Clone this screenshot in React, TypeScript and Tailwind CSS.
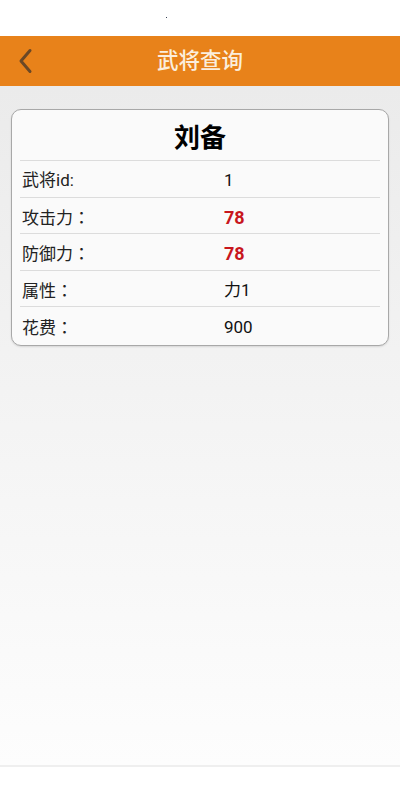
import React from 'react';

interface Row {
  label: string;
  colon: string;
  value: string;
  highlight?: boolean;
}

const rows: Row[] = [
  { label: '武将id', colon: ':', value: '1' },
  { label: '攻击力', colon: '：', value: '78', highlight: true },
  { label: '防御力', colon: '：', value: '78', highlight: true },
  { label: '属性', colon: '：', value: '力1' },
  { label: '花费', colon: '：', value: '900' },
];

const font = { fontFamily: 'Roboto, "Noto Sans CJK SC", sans-serif' };
const colonFont = { fontFamily: '"Noto Sans CJK TC", sans-serif' };

export default function App() {
  return (
    <div className="flex h-[800px] w-[400px] flex-col bg-white" style={font}>
      {/* Status bar */}
      <div className="relative h-[36px] shrink-0 bg-white">
        <span className="absolute left-[166px] top-[17px] h-[1px] w-[1px] bg-gray-700" />
      </div>

      {/* Header */}
      <div className="relative flex h-[50px] shrink-0 items-center justify-center bg-[#e8821a]">
        <button className="absolute left-[14px] top-[11px] flex h-[28px] w-[22px] items-center justify-center">
          <svg width="16" height="26" viewBox="0 0 16 26" fill="none">
            <path d="M13 2.5 L4 13 L13 23.5" stroke="#6b4826" strokeWidth="3" strokeLinecap="round" strokeLinejoin="round" />
          </svg>
        </button>
        <h1 className="text-[21.5px] font-medium text-[#fbeedd]">武将查询</h1>
      </div>

      {/* Body */}
      <div className="flex flex-1 flex-col bg-gradient-to-b from-[#ebebeb] to-[#fdfdfd] px-[11px] pt-[23px]">
        <div className="rounded-[10px] border border-[#a8a8a8] bg-[#fafafa] px-[8px] pb-[1px] shadow-[0_1px_2px_rgba(0,0,0,0.12)]">
          <div className="flex h-[51px] items-center justify-center border-b border-[#dcdcdc] pt-[6px]">
            <span className="text-[26px] font-bold text-black">刘备</span>
          </div>
          {rows.map((row, i) => (
            <div
              key={row.label}
              className={`flex h-[36.5px] items-center pt-[4px] ${i < rows.length - 1 ? 'border-b border-[#dcdcdc]' : ''}`}
            >
              <span className="w-[204px] pl-[2px] text-[17px] text-[#222]">
                {row.label}
                <span style={row.colon === ':' ? undefined : colonFont}>{row.colon}</span>
              </span>
              <span
                className={
                  row.highlight
                    ? 'text-[18px] font-bold text-[#c8161d]'
                    : 'text-[17px] text-[#111]'
                }
              >
                {row.value}
              </span>
            </div>
          ))}
        </div>
        <div className="flex-1" />
      </div>

      {/* Bottom bar */}
      <div className="h-[35px] shrink-0 border-t-2 border-[#efefef] bg-white" />
    </div>
  );
}
